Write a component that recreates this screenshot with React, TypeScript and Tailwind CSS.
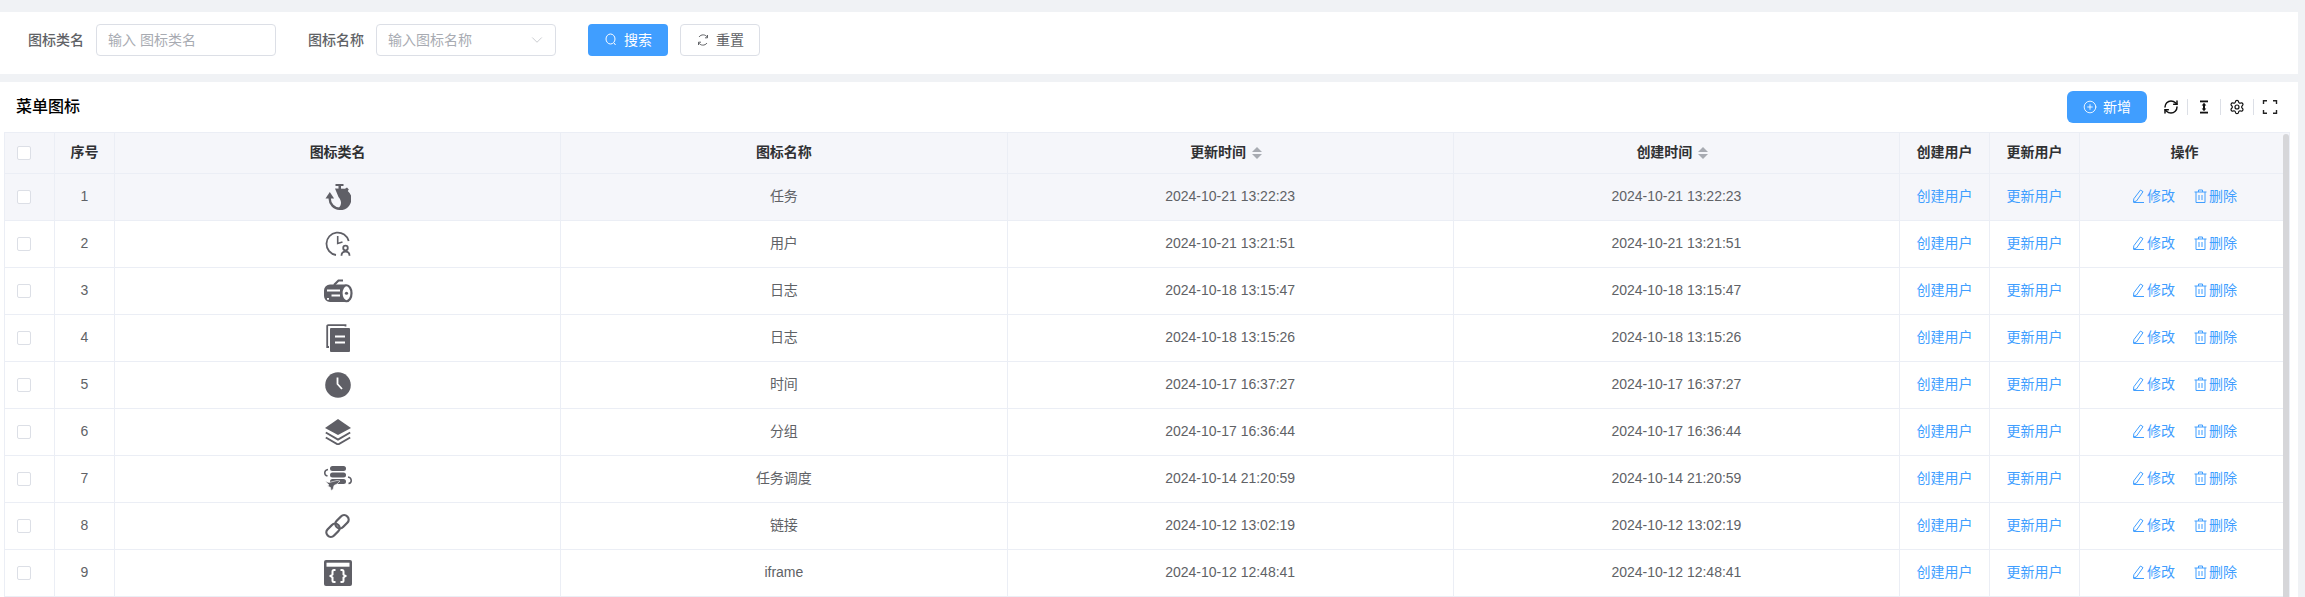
import { ChevronDown, CirclePlus, RefreshCw, Settings } from "lucide-react";
import type { ReactNode } from "react";

const rows = [
  { id: 1, icon: "task", name: "任务", time: "2024-10-21 13:22:23" },
  { id: 2, icon: "user", name: "用户", time: "2024-10-21 13:21:51" },
  { id: 3, icon: "log", name: "日志", time: "2024-10-18 13:15:47" },
  { id: 4, icon: "doc", name: "日志", time: "2024-10-18 13:15:26" },
  { id: 5, icon: "clock", name: "时间", time: "2024-10-17 16:37:27" },
  { id: 6, icon: "layers", name: "分组", time: "2024-10-17 16:36:44" },
  { id: 7, icon: "schedule", name: "任务调度", time: "2024-10-14 21:20:59" },
  { id: 8, icon: "link", name: "链接", time: "2024-10-12 13:02:19" },
  { id: 9, icon: "iframe", name: "iframe", time: "2024-10-12 12:48:41" },
];

const MenuIcon = ({ name }: { name: string }) => {
  const c = "#5f5f66";
  const common = { className: "mx-auto block", fill: "none" };
  if (name === "task")
    return (
      <svg {...common} width="26" height="26" viewBox="0 0 26 26">
        <rect x="10.500" y="0" width="8" height="2" fill={c} />
        <rect x="13.500" y="2" width="2.500" height="3" fill={c} />
        <path d="M10 4.500 20 4.800 22 3.500 23.800 5.500 22.800 7A11 11 0 0 1 14 26L14 23.800C16.500 21 17 17 13.500 13Z" fill={c} />
        <path d="M15 24.800A10 10 0 0 1 4.800 14" stroke={c} strokeWidth="2.400" />
        <path d="M4.800 8 .5 14.500h8.600z" fill={c} />
      </svg>
    );
  if (name === "user")
    return (
      <svg {...common} width="26" height="26" viewBox="0 0 26 26">
        <path d="M23.700 10A11.300 11.300 0 1 0 11 24" stroke={c} strokeWidth="1.800" />
        <path d="M12.700 5v7.500l4.800-1.500" stroke={c} strokeWidth="1.600" />
        <circle cx="20.500" cy="17" r="2.300" stroke={c} strokeWidth="1.800" />
        <path d="M16.500 24.800c0-5.500 8-5.500 8 0" stroke={c} strokeWidth="1.800" />
      </svg>
    );
  if (name === "log")
    return (
      <svg {...common} width="30" height="24" viewBox="0 0 30 24">
        <path d="M23 5.500H7A6 6 0 0 0 1 11.500V17A6 6 0 0 0 7 23H23z" fill={c} />
        <path d="M4 11.500H17M8.500 16.500H17M4 19.800h2" stroke="#fff" strokeWidth="1.800" />
        <ellipse cx="23.500" cy="14.250" rx="5" ry="8" fill="#fff" stroke={c} strokeWidth="2.200" />
        <circle cx="23.500" cy="14.250" r="1.600" fill={c} />
        <path d="M11 6 15.500 1.500H20" stroke={c} strokeWidth="2.200" />
      </svg>
    );
  if (name === "doc")
    return (
      <svg {...common} width="24" height="28" viewBox="0 0 24 28">
        <path d="M19.500 2.500V1.200H2.200a1 1 0 0 0-1 1V23H3" stroke={c} strokeWidth="1.800" />
        <rect x="4" y="4" width="20" height="24" rx="1" fill={c} />
        <path d="M9 12.500h10M9 18.500h10" stroke="#fff" strokeWidth="2" />
      </svg>
    );
  if (name === "clock")
    return (
      <svg {...common} width="26" height="26" viewBox="0 0 26 26">
        <circle cx="13" cy="13" r="12.800" fill={c} />
        <path d="M12.500 5.500v6.500l4.500 5" stroke="#fff" strokeWidth="1.800" />
      </svg>
    );
  if (name === "layers")
    return (
      <svg {...common} width="26" height="26" viewBox="0 0 26 26">
        <path d="M13 0 26 9 13 16 0 9z" fill={c} />
        <path d="M.8 13.500 13 20.500l12.200-7M.8 18.500 13 25.500l12.200-7" stroke={c} strokeWidth="2" />
      </svg>
    );
  if (name === "schedule")
    return (
      <svg {...common} width="30" height="28" viewBox="0 0 30 28">
        <rect x="7" y="1" width="16" height="5" rx="2.500" fill={c} />
        <rect x="7" y="7.500" width="16" height="5" rx="2.500" fill={c} />
        <rect x="7" y="14" width="16" height="5" rx="2.500" fill={c} />
        <path d="M5 4.500C1 5 .5 10 4.500 11M25 12c4 .5 4.500 6 .5 6.500" stroke={c} strokeWidth="1.500" />
        <path d="M2 16c2 1 4 2 6 1l6-1.500 3 .5-3 3-3 1.500-1 4-2 1-.5-3-3-1.500L6 20z" fill={c} stroke="#fff" strokeWidth=".6" />
      </svg>
    );
  if (name === "link")
    return (
      <svg {...common} width="25" height="26" viewBox="0 0 25 26">
        <rect x="0.500" y="12.750" width="15" height="9" rx="4.500" transform="rotate(-45 8 17.250)" stroke={c} strokeWidth="2.300" />
        <rect x="9.500" y="4.250" width="15" height="9" rx="4.500" transform="rotate(-45 17 8.750)" stroke={c} strokeWidth="2.300" />
      </svg>
    );
  return (
    <svg {...common} width="28" height="26" viewBox="0 0 28 26">
      <rect width="28" height="26" rx="2" fill={c} />
      <rect x="2.500" y="2.700" width="23" height="4" fill="#fff" />
      <path
        d="M11.500 10H10Q8.500 10 8.500 11.500V14.500L6.500 16L8.500 17.500V20.500Q8.500 22 10 22H11.500M16.500 10H18Q19.500 10 19.500 11.500V14.500L21.500 16L19.500 17.500V20.500Q19.500 22 18 22H16.500"
        stroke="#fff"
        strokeWidth="2"
      />
    </svg>
  );
};

const SearchIcon = () => (
  <svg width="14" height="14" viewBox="0 0 14 14" fill="none" stroke="currentColor" strokeWidth="1">
    <ellipse cx="6.500" cy="6" rx="4.500" ry="5" />
    <path d="m10 10 1.500 2" />
  </svg>
);

const ResetIcon = () => (
  <svg width="14" height="14" viewBox="0 0 14 14" fill="none" stroke="currentColor" strokeWidth="1">
    <path d="M11.500 4.500A5 5 0 0 0 3 4M2.500 9.500A5 5 0 0 0 11 10" />
    <path d="M11.500 2v2.800H9M2.500 12V9.200H5" />
  </svg>
);

const DensityIcon = () => (
  <svg width="16" height="16" viewBox="0 0 16 16" fill="#111">
    <rect x="4" y="1.500" width="8" height="1.800" />
    <rect x="4" y="12.700" width="8" height="1.800" />
    <path d="M8 3.800 10.300 6.500H9v3h1.300L8 12.200 5.700 9.500H7v-3H5.700z" />
  </svg>
);

const FullscreenIcon = () => (
  <svg width="16" height="16" viewBox="0 0 16 16" fill="none" stroke="#222" strokeWidth="1.400">
    <path d="M1.500 5V1.700H5M11 1.700h3.500V5M14.500 11v3.300H11M5 14.300H1.500V11" />
  </svg>
);

const EditIcon = () => (
  <svg width="13" height="14" viewBox="0 0 13 14" fill="none" stroke="currentColor" strokeWidth="1">
    <path d="M8.500 1 11 2.700 4.500 12 1.500 13l.3-3.200zM1.500 13.500H12" />
  </svg>
);

const TrashIcon = () => (
  <svg width="13" height="14" viewBox="0 0 13 14" fill="none" stroke="currentColor" strokeWidth="1">
    <path d="M.5 3h12M4.500 3V1h4v2M2 3v10.500h9V3M5 6v5M8 6v5" />
  </svg>
);

const Sort = () => (
  <span className="ml-[6px] mr-[8px] inline-flex flex-col gap-[2px] align-middle">
    <span className="h-0 w-0 border-x-[5px] border-b-[5px] border-x-transparent border-b-[#a8abb2]" />
    <span className="h-0 w-0 border-x-[5px] border-t-[5px] border-x-transparent border-t-[#a8abb2]" />
  </span>
);

const Th = ({ children }: { children: ReactNode }) => (
  <th className="border border-[#ebeef5] pb-[2px] text-center text-sm font-semibold text-[#303133]">{children}</th>
);

const Td = ({ children }: { children: ReactNode }) => (
  <td className="border border-[#ebeef5] pb-[2px] text-center text-sm text-[#606266]">{children}</td>
);

const Checkbox = () => <span className="block h-[14px] w-[14px] rounded-[2px] border border-[#dcdfe6] bg-white" />;

const Toolbar = () => (
  <div className="flex items-center text-[#111]">
    <RefreshCw size={16} strokeWidth={2.200} />
    <span className="mx-2 h-4 w-px bg-[#dcdfe6]" />
    <DensityIcon />
    <span className="mx-2 h-4 w-px bg-[#dcdfe6]" />
    <Settings size={16} strokeWidth={1.800} />
    <span className="mx-2 h-4 w-px bg-[#dcdfe6]" />
    <FullscreenIcon />
  </div>
);

export default function App() {
  return (
    <div className="h-screen overflow-hidden bg-[#f0f2f5] pt-3 [font-family:'Liberation_Sans','Noto_Sans_CJK_SC',sans-serif]">
      {/* search */}
      <div className="mr-[7px] flex h-[62px] items-start bg-white pl-7 pt-3 text-sm">
        <span className="flex h-8 items-center font-medium text-[#606266]">图标类名</span>
        <div className="ml-3 flex h-8 w-[180px] items-center rounded border border-[#dcdfe6] px-[11px] text-[#a8abb2]">
          输入 图标类名
        </div>
        <span className="ml-8 flex h-8 items-center font-medium text-[#606266]">图标名称</span>
        <div className="ml-3 flex h-8 w-[180px] items-center justify-between rounded border border-[#dcdfe6] pl-[11px] pr-[9px] text-[#a8abb2]">
          输入图标名称
          <ChevronDown size={18} strokeWidth={0.8} />
        </div>
        <button className="ml-8 flex h-8 w-20 items-center justify-center gap-[6px] rounded bg-[#409eff] text-white">
          <SearchIcon />
          搜索
        </button>
        <button className="ml-3 flex h-8 w-20 items-center justify-center gap-[6px] rounded border border-[#dcdfe6] text-[#606266]">
          <ResetIcon />
          重置
        </button>
      </div>

      {/* table panel */}
      <div className="mr-[7px] mt-2 h-[600px] bg-white">
        <div className="flex h-[50px] items-center justify-between pl-4 pr-[20px]">
          <span className="text-base font-medium text-black">菜单图标</span>
          <div className="flex items-center gap-4">
            <button className="flex h-8 w-20 items-center justify-center gap-[6px] rounded-md bg-[#409eff] text-sm text-white">
              <CirclePlus size={14} strokeWidth={1.500} />
              新增
            </button>
            <Toolbar />
          </div>
        </div>
        <div className="relative ml-1 mr-2 overflow-hidden">
          <table className="w-full table-fixed border-collapse">
            <colgroup>
              <col className="w-[50px]" />
              <col className="w-[60px]" />
              <col />
              <col />
              <col />
              <col />
              <col className="w-[90px]" />
              <col className="w-[90px]" />
              <col className="w-[210px]" />
            </colgroup>
            <thead>
              <tr className="h-[41px] bg-[#f5f6fa]">
                <th className="border border-[#ebeef5] pl-3">
                  <Checkbox />
                </th>
                <Th>序号</Th>
                <Th>图标类名</Th>
                <Th>图标名称</Th>
                <Th>
                  更新时间
                  <Sort />
                </Th>
                <Th>
                  创建时间
                  <Sort />
                </Th>
                <Th>创建用户</Th>
                <Th>更新用户</Th>
                <Th>操作</Th>
              </tr>
            </thead>
            <tbody>
              {rows.map((row) => (
                <tr key={row.id} className={row.id === 1 ? "h-[47px] bg-[#f5f6fa]" : "h-[47px] bg-white"}>
                  <td className="border border-[#ebeef5] pl-3">
                    <Checkbox />
                  </td>
                  <Td>{row.id}</Td>
                  <td className="border border-[#ebeef5]">
                    <MenuIcon name={row.icon} />
                  </td>
                  <Td>{row.name}</Td>
                  <Td>{row.time}</Td>
                  <Td>{row.time}</Td>
                  <Td>
                    <span className="text-[#409eff]">创建用户</span>
                  </Td>
                  <Td>
                    <span className="text-[#409eff]">更新用户</span>
                  </Td>
                  <Td>
                    <div className="flex items-center justify-center gap-[19px] text-[#409eff]">
                      <span className="flex items-center gap-[2px]">
                        <EditIcon />
                        修改
                      </span>
                      <span className="flex items-center gap-[2px]">
                        <TrashIcon />
                        删除
                      </span>
                    </div>
                  </Td>
                </tr>
              ))}
            </tbody>
          </table>
          {/* scrollbar thumb over the table */}
          <div className="absolute bottom-0 right-[1px] top-[2px] w-[6px] rounded-t-[3px] bg-[#d6d6d9]" />
        </div>
      </div>
    </div>
  );
}
